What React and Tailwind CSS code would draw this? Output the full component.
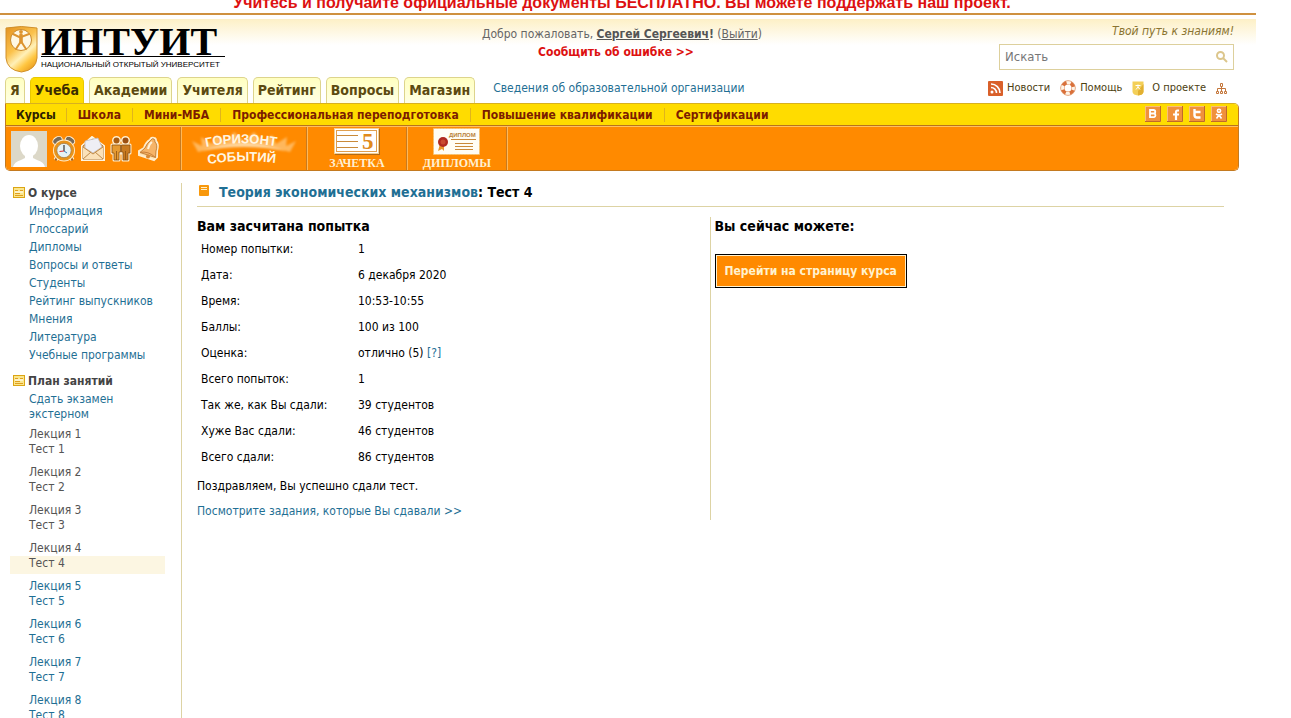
import React from "react";

const courseLinks = [
  "Информация",
  "Глоссарий",
  "Дипломы",
  "Вопросы и ответы",
  "Студенты",
  "Рейтинг выпускников",
  "Мнения",
  "Литература",
  "Учебные программы",
];

const lessons = [1, 2, 3, 4, 5, 6, 7, 8];

const tabs = ["Я", "Учеба", "Академии", "Учителя", "Рейтинг", "Вопросы", "Магазин"];

const sections = [
  "Курсы",
  "Школа",
  "Мини-МБА",
  "Профессиональная переподготовка",
  "Повышение квалификации",
  "Сертификации",
];

const results = [
  ["Номер попытки:", "1"],
  ["Дата:", "6 декабря 2020"],
  ["Время:", "10:53-10:55"],
  ["Баллы:", "100 из 100"],
  ["Оценка:", "отлично (5)"],
  ["Всего попыток:", "1"],
  ["Так же, как Вы сдали:", "39 студентов"],
  ["Хуже Вас сдали:", "46 студентов"],
  ["Всего сдали:", "86 студентов"],
];

function Shield() {
  return (
    <svg width="33" height="48" viewBox="0 0 33 48" className="shrink-0" aria-hidden="true">
      <defs>
        <linearGradient id="gold" x1="0.200" y1="0" x2="0.800" y2="1">
          <stop offset="0" stopColor="#e89a28" />
          <stop offset="0.400" stopColor="#fbc24c" />
          <stop offset="0.620" stopColor="#fff0b8" />
          <stop offset="0.800" stopColor="#ffc640" />
          <stop offset="1" stopColor="#e8981c" />
        </linearGradient>
      </defs>
      <path d="M1 3Q16 0 32 3V33Q31 45 16.500 47Q2 45 1 33Z" fill="url(#gold)" stroke="#d0902c" />
      <circle cx="16" cy="15" r="10.500" fill="#fff8e4" stroke="#c98a2c" />
      <g stroke="#dd9430" fill="none" strokeLinecap="round">
        <path d="M16 10V17" strokeWidth="3.600" />
        <path d="M8 9L15 12.500L24 9M15.500 17L11 24M16.500 17L21 24" strokeWidth="2" />
      </g>
      <circle cx="16" cy="6.800" r="1.900" fill="#dd9430" />
    </svg>
  );
}

function Logo() {
  return (
    <a href="#" className="flex w-[220px] shrink-0 gap-[3px] pt-1.5 text-black">
      <Shield />
      <span className="flex flex-1 flex-col pt-0.5">
        <span className="flex h-[30px] items-center border-b border-black font-['Liberation_Serif',serif] text-[40px] leading-[30px] font-bold">
          ИНТУИТ
        </span>
        <span className="pt-0.5 font-['Liberation_Sans',sans-serif] text-[8px] leading-3 whitespace-nowrap">
          НАЦИОНАЛЬНЫЙ ОТКРЫТЫЙ УНИВЕРСИТЕТ
        </span>
      </span>
    </a>
  );
}

function RssIcon() {
  return (
    <svg width="15" height="15" viewBox="0 0 15 15" aria-hidden="true">
      <rect width="15" height="15" rx="1" fill="#d9602a" />
      <circle cx="4" cy="11" r="1.5" fill="#fff" />
      <path d="M3 6.5A5.5 5.5 0 0 1 8.500 12M3 3A9 9 0 0 1 12 12" fill="none" stroke="#fff" strokeWidth="1.600" />
    </svg>
  );
}

function LifebuoyIcon() {
  return (
    <svg width="16" height="16" viewBox="0 0 16 16" aria-hidden="true">
      <circle cx="8" cy="8" r="5.500" fill="none" stroke="#d9703a" strokeWidth="4" />
      <circle cx="8" cy="8" r="5.500" fill="none" stroke="#fff4e6" strokeWidth="3.400" strokeDasharray="4.320 4.320" strokeDashoffset="2.160" />
      <circle cx="8" cy="8" r="7.300" fill="none" stroke="#e0a27c" strokeWidth="0.600" />
    </svg>
  );
}

function SmallShieldIcon() {
  return (
    <svg width="12" height="15" viewBox="0 0 12 15" aria-hidden="true">
      <path d="M0.500 0.500H11.500V11Q11 14 6 14.500Q1 14 0.500 11Z" fill="#f3cf58" />
      <path d="M6 10L11.500 3V11Q11 14 6 14.500Z" fill="#e2b030" />
      <path d="M6 3.500V6L4 8.500M6 6L8 8.500M3.500 4.500H8.500" stroke="#fff" fill="none" />
    </svg>
  );
}

function SitemapIcon() {
  return (
    <svg width="11" height="11" viewBox="0 0 11 11" fill="none" stroke="#c4763a" aria-hidden="true">
      <path d="M4.500 0.500H6.500V3.500H4.500ZM5.500 3.500V8M1.500 8V5.500H9.500V8M0.500 8.500H2.500V10.500H0.500ZM4.500 8.500H6.500V10.500H4.500ZM8.500 8.500H10.500V10.500H8.500Z" />
    </svg>
  );
}

function SearchIcon() {
  return (
    <svg width="12" height="12" viewBox="0 0 12 12" fill="none" stroke="#dcc68c" strokeWidth="2" aria-hidden="true">
      <circle cx="4.500" cy="4.500" r="3.500" />
      <path d="M7 7L11 11" />
    </svg>
  );
}

const socialPaths = [
  ["ВКонтакте", <path key="b" d="M5 4H8.500A1.700 1.700 0 0 1 8.500 7.500H5ZM5 7.500H9A1.900 1.900 0 0 1 9 11.200H5Z" fill="none" stroke="#fff" strokeWidth="1.800" />],
  ["Facebook", <path key="f" d="M12 4.500H10.500Q9 4.500 9 6.500V14M6 8.500H12" fill="none" stroke="#fff" strokeWidth="2.200" />],
  ["Twitter", <path key="t" d="M5.500 3V9Q5.500 11.500 8 11.500H11.500M5.500 6H11.500" fill="none" stroke="#fff" strokeWidth="2.400" />],
  [
    "Одноклассники",
    <g key="o" fill="none" stroke="#fff" strokeWidth="1.600">
      <circle cx="8" cy="4.800" r="1.600" />
      <path d="M5 8Q8 10 11 8M8 9L5.500 12.500M8 9L10.500 12.500" />
    </g>,
  ],
];

function Social() {
  return (
    <div className="ml-auto flex gap-1.5 pb-0.5">
      {socialPaths.map(([name, shape]) => (
        <a key={name} href="#" aria-label={name}>
          <svg width="16" height="16" viewBox="0 0 16 16">
            <rect x="0.500" y="0.500" width="15" height="15" fill="#f0913c" stroke="#f8bd7c" />
            <path d="M0 15.500H15.500V0" fill="none" stroke="#c0692a" />
            {shape}
          </svg>
        </a>
      ))}
    </div>
  );
}

function Avatar() {
  return (
    <svg width="36" height="36" viewBox="0 0 36 36" aria-hidden="true">
      <rect width="36" height="36" fill="#dcd8c8" />
      <ellipse cx="18" cy="15" rx="9" ry="11" fill="#fff" />
      <path d="M2 36Q3 31 10 29L14 27V22H22V27L26 29Q33 31 34 36Z" fill="#fff" />
    </svg>
  );
}

function ClockIcon() {
  return (
    <svg width="24" height="26" viewBox="0 0 24 26" aria-hidden="true">
      <path d="M5 21L3.500 24M19 21L20.500 24" stroke="#ffeccb" strokeWidth="4" />
      <path d="M5 21L3.500 24.500M19 21L20.500 24.500" stroke="#a8641c" strokeWidth="2" />
      <ellipse cx="5.500" cy="4.500" rx="5" ry="3.500" transform="rotate(-30 5.500 4.500)" fill="#756a5c" stroke="#ffeccb" />
      <ellipse cx="18" cy="4.500" rx="5" ry="3.500" transform="rotate(30 18 4.500)" fill="#756a5c" stroke="#ffeccb" />
      <circle cx="12" cy="14.500" r="11" fill="#ffeccb" />
      <circle cx="12" cy="14.500" r="8.700" fill="#e6f2f4" stroke="#e8941c" strokeWidth="2.800" />
      <circle cx="12" cy="14.500" r="7.200" fill="none" stroke="#9b6b2b" strokeWidth="0.700" />
      <path d="M12 9V15" stroke="#333" strokeWidth="1.200" />
      <path d="M12 15L7.500 15.500" stroke="#d33" strokeWidth="1.200" />
      <path d="M12 15L15 17" stroke="#3a7fc0" />
    </svg>
  );
}

function EnvelopeIcon() {
  return (
    <svg width="24" height="26" viewBox="0 0 24 26" aria-hidden="true">
      <path d="M1 10L11 1L23 10V24H1Z" fill="#fff5e0" stroke="#fff5e0" strokeWidth="2" />
      <path d="M2 10L12 3L22 10V23H2Z" fill="#f5c88a" stroke="#b07432" />
      <path d="M4 5L17 2L21 11L12 17L4 12Z" fill="#eeeef4" stroke="#b9b3b4" strokeWidth="0.700" />
      <path d="M2 11L12 17.500L22 11V23H2Z" fill="#fbe1b8" />
      <path d="M2 23L10 16M22 23L14 16M2 11L12 18L22 11" fill="none" stroke="#c08a4a" />
    </svg>
  );
}

function PeopleIcon() {
  return (
    <svg width="22" height="26" viewBox="0 0 22 26" aria-hidden="true">
      <g fill="#ffeccb" stroke="#ffeccb" strokeWidth="3" strokeLinejoin="round">
        <circle cx="6.500" cy="4.500" r="3" />
        <circle cx="15.500" cy="4.500" r="3" />
        <path d="M2 9H20V17H18V24H13V17H9V24H4V17H2Z" />
      </g>
      <circle cx="6.500" cy="4.500" r="3" fill="#a85c12" />
      <circle cx="15.500" cy="4.500" r="3" fill="#9c5012" />
      <path d="M2 9H10.500V16H9V24H4V17H2Z" fill="#e59a32" stroke="#8c5010" strokeWidth="0.800" />
      <path d="M11.500 9H20V17H18V24H13V16H11.500Z" fill="#c87a20" stroke="#8c5010" strokeWidth="0.800" />
      <path d="M6.500 15V24M15.500 15V24" stroke="#8c5010" strokeWidth="0.800" />
    </svg>
  );
}

function BellIcon() {
  return (
    <svg width="24" height="26" viewBox="0 0 24 26" aria-hidden="true">
      <path d="M13 4Q14 1 17 2Q19 2 19 5Q22 8 20 15L20 21L17 24L2 19L2 15L7 12Q9 6 13 4Z" fill="#fde0ae" stroke="#ffeccb" strokeWidth="2" />
      <path d="M14 4Q15 2 17 3Q18 4 18 6Q21 9 19 15L18.500 21.500L3 16.500L8 12Q10 7 14 4Z" fill="#f6b468" stroke="#b8722a" strokeWidth="0.800" />
      <path d="M3 16.500Q11 14.500 18.500 21.500" fill="none" stroke="#c9803a" />
      <circle cx="11" cy="20.500" r="2" fill="#d98a35" />
      <path d="M11 13Q12 8 15 6" stroke="#fff2da" strokeWidth="2" fill="none" />
    </svg>
  );
}

function Horizon() {
  return (
    <svg width="108" height="40" viewBox="0 0 108 40" role="img" aria-label="Горизонт событий">
      <defs>
        <filter id="soft" x="-10%" y="-20%" width="120%" height="140%">
          <feGaussianBlur stdDeviation="1.300" />
        </filter>
        <path id="arcTop" d="M16 18Q54 10 96 19" />
        <path id="arcBottom" d="M18 35Q54 29 92 35" />
      </defs>
      <g filter="url(#soft)" fill="#ffdca8">
        <path d="M8 23L2 12L12 17L11 8L22 15L26 6L36 13L44 3L54 12L64 3L73 13L82 6L86 15L97 8L96 17L106 12L100 23Q54 10 8 23Z" opacity="0.550" />
        <path d="M12 22Q54 6 96 22Q54 14 12 22Z" opacity="0.900" />
      </g>
      <g fill="#fff6e2" className="font-['Liberation_Sans',sans-serif] text-[13px] font-bold">
        <text><textPath href="#arcTop">ГОРИЗОНТ</textPath></text>
        <text><textPath href="#arcBottom">СОБЫТИЙ</textPath></text>
      </g>
    </svg>
  );
}

function GradebookIcon() {
  return (
    <svg width="46" height="27" viewBox="0 0 46 27" aria-hidden="true">
      <rect x="1" y="1" width="45" height="26" fill="#b06a18" />
      <rect x="0.500" y="0.500" width="44" height="25" fill="#fff" stroke="#f2cf94" />
      <rect x="2.500" y="2.500" width="40" height="21" fill="none" stroke="#e0a050" />
      <path d="M3 7.500H24M3 13.500H24M3 19.500H24" stroke="#c98a3a" />
      <text x="28" y="21" fill="#e08a1c" className="font-['Liberation_Serif',serif] text-[23px] font-bold">5</text>
    </svg>
  );
}

function DiplomaIcon() {
  return (
    <svg width="48" height="27" viewBox="0 0 48 27" aria-hidden="true">
      <rect x="0.500" y="0.500" width="46" height="26" fill="#fffdf4" stroke="#f2c06c" strokeDasharray="2 1" />
      <path d="M7 16L5 23L9 21L11 23V16Z" fill="#e8962c" />
      <circle cx="10" cy="14" r="5" fill="#b02a20" />
      <circle cx="10" cy="14" r="2.500" fill="#c94a30" />
      <path d="M18 11.500H43M22 15.500H40M22 18.500H40M22 21.500H40" stroke="#c98a3a" />
      <text x="16" y="9" fill="#b8823a" className="font-['Liberation_Sans',sans-serif] text-[6px]">ДИПЛОМ</text>
    </svg>
  );
}

function PanelIcon() {
  return (
    <svg width="12" height="11" viewBox="0 0 12 11" aria-hidden="true">
      <rect x="0.500" y="0.500" width="11" height="10" fill="#fbe68c" stroke="#dba514" />
      <path d="M2 3.500H5M7 3.500H10M2 6.500H7M2 8.500H10" stroke="#e0a020" />
      <path d="M2 5H10" stroke="#fff" />
    </svg>
  );
}

function BookIcon() {
  return (
    <svg width="10" height="11" viewBox="0 0 10 11" className="mb-1" aria-hidden="true">
      <rect width="10" height="11" rx="1" fill="#f8980c" />
      <path d="M2 2.500H8M2 4.500H8" stroke="#fff0c8" />
    </svg>
  );
}

function Header() {
  return (
    <header className="mt-1 bg-linear-to-b from-[#fdf0c6] to-white bg-[length:100%_26px] bg-no-repeat pr-[22px] pl-[5px]">
      <div className="flex h-[58px]">
        <Logo />
        <div className="ml-5 flex-1 pt-1.5 text-center text-[12px] leading-[18px] text-[#666]">
          <p>
            Добро пожаловать, <a href="#" className="font-bold text-[#555] underline">Сергей Сергеевич</a>
            <b className="text-[#555]">!</b> (<a href="#" className="underline">Выйти</a>)
          </p>
          <a href="#" className="mr-3 font-bold text-[#dd1111]">Сообщить об ошибке &gt;&gt;</a>
        </div>
        <div className="flex w-[235px] flex-col gap-1 pt-1 text-right">
          <p className="text-[12px] leading-[17px] text-[#8a7430] italic">Твой путь к знаниям!</p>
          <form className="flex h-[26px] items-center border border-[#ddd09c] bg-white px-[5px]">
            <input type="search" aria-label="Искать" placeholder="Искать" className="min-w-0 flex-1 bg-transparent text-[13px] outline-none placeholder:text-[#777]" />
            <button type="button" aria-label="Найти"><SearchIcon /></button>
          </form>
        </div>
      </div>
      <div className="flex h-[26px]">
        <nav className="flex gap-[5px]">
          {tabs.map((tab) => (
            <a
              key={tab}
              href="#"
              className={
                tab === "Учеба"
                  ? "rounded-t-[5px] border border-b-0 border-[#e8c800] bg-[#ffdc00] px-1 text-[14px] leading-[25px] font-bold text-[#3c2c00]"
                  : "rounded-t-[5px] border border-b-0 border-[#ddd48c] bg-linear-to-b from-[#ffffc0] to-[#ffffe4] px-1 text-[14px] leading-[25px] font-bold text-[#5c4a10]"
              }
            >
              {tab}
            </a>
          ))}
        </nav>
        <a href="#" className="ml-[18px] text-[12px] leading-[22px] text-[#1f6f94]">Сведения об образовательной организации</a>
        <nav className="ml-auto flex h-[22px] items-center gap-2.5 pr-[7px] text-[11px] text-[#4c4010]">
          <a href="#" className="flex items-center gap-1"><RssIcon />Новости</a>
          <a href="#" className="flex items-center gap-1"><LifebuoyIcon />Помощь</a>
          <a href="#" className="flex items-center gap-2"><SmallShieldIcon />О проекте</a>
          <a href="#" aria-label="Карта сайта"><SitemapIcon /></a>
        </nav>
      </div>
    </header>
  );
}

function Toolbar() {
  return (
    <div className="mr-[17px] ml-[5px] overflow-hidden rounded-tr-[5px] rounded-b-[5px] border border-[#c47a20] border-t-[#d8b020]">
      <nav className="flex h-[22px] items-center border-b border-[#b8741c] bg-[#ffdc00] pr-[11px] text-[12px] leading-[14px] font-bold text-[#7c1c00]">
        {sections.map((name, i) => (
          <a key={name} href="#" className={i === 0 ? "px-[10px] text-[#2c2000]" : "border-l border-[#e0b41c] px-[11px]"}>
            {name}
          </a>
        ))}
        <Social />
      </nav>
      <div className="flex h-11 border-t border-[#ffc060] bg-[#ff8a00] font-['Liberation_Serif',serif] text-[12px] leading-3 font-bold text-[#fff0d0]">
        <div className="flex w-[175px] items-center gap-[5px] border-r border-[#c87a20] pl-[5px]">
          <Avatar />
          <a href="#" aria-label="Расписание"><ClockIcon /></a>
          <a href="#" aria-label="Сообщения"><EnvelopeIcon /></a>
          <a href="#" aria-label="Друзья"><PeopleIcon /></a>
          <a href="#" aria-label="Уведомления"><BellIcon /></a>
        </div>
        <a href="#" className="flex w-[126px] items-center justify-center border-r border-l border-r-[#c87a20] border-l-[#ffb858]"><Horizon /></a>
        <a href="#" className="flex w-[100px] flex-col items-center gap-0.5 border-r border-l border-r-[#c87a20] border-l-[#ffb858] pt-px"><GradebookIcon />ЗАЧЕТКА</a>
        <a href="#" className="flex w-[100px] flex-col items-center gap-0.5 border-r border-l border-r-[#c87a20] border-l-[#ffb858] pt-px"><DiplomaIcon />ДИПЛОМЫ</a>
        <span className="border-l border-[#ffb858]" />
      </div>
    </div>
  );
}

function Sidebar() {
  return (
    <aside className="w-[182px] shrink-0 border-r border-[#ddd3a4] pr-4 pl-[10px] text-[12px] text-[#1f6f94]">
      <h2 className="flex h-[19px] items-center gap-[3px] pl-[3px] font-bold text-[#444]"><PanelIcon />О курсе</h2>
      <ul className="pl-[19px] leading-[18px]">
        {courseLinks.map((name) => (
          <li key={name}><a href="#">{name}</a></li>
        ))}
      </ul>
      <h2 className="mt-[7px] flex h-[19px] items-center gap-[3px] pl-[3px] font-bold text-[#444]"><PanelIcon />План занятий</h2>
      <p className="mt-0.5 mb-[3px] pl-[19px] leading-[15px]"><a href="#">Сдать экзамен<br />экстерном</a></p>
      <ul className="leading-[15px]">
        {lessons.map((n) => (
          <li key={n} className={n < 5 ? "flex h-[38px] flex-col text-[#555]" : "flex h-[38px] flex-col"}>
            <a href="#" className="pt-[2px] pl-[19px]">Лекция {n}</a>
            <a href="#" className={n === 4 ? "bg-[#fcf6e2] pb-[3px] pl-[19px]" : "pb-[3px] pl-[19px]"}>Тест {n}</a>
          </li>
        ))}
      </ul>
    </aside>
  );
}

function Result() {
  return (
    <main className="flex-1 pr-8 pl-[15px] text-[12px] text-black">
      <h1 className="flex h-6 items-center gap-2.5 border-b border-[#ddd3a4] pb-1 pl-0.5 text-[14px] font-bold">
        <BookIcon />
        <span><a href="#" className="text-[#1f6f94]">Теория экономических механизмов</a>: Тест 4</span>
      </h1>
      <div className="mt-2.5 grid grid-cols-2">
        <section className="h-[303px] border-r border-[#ddd3a4]">
          <h2 className="text-[14px] leading-[19px] font-bold">Вам засчитана попытка</h2>
          <table className="ml-1">
            <tbody>
              {results.map(([label, value]) => (
                <tr key={label} className="h-[26px]">
                  <th scope="row" className="w-[157px] text-left font-normal">{label}</th>
                  <td>
                    {value}
                    {label === "Оценка:" && <a href="#" className="text-[#1f6f94]"> [?]</a>}
                  </td>
                </tr>
              ))}
            </tbody>
          </table>
          <p className="mt-[7px] leading-[18px]">Поздравляем, Вы успешно сдали тест.</p>
          <p className="mt-[7px] leading-[18px]"><a href="#" className="text-[#1f6f94]">Посмотрите задания, которые Вы сдавали &gt;&gt;</a></p>
        </section>
        <section className="pl-1">
          <h2 className="text-[14px] leading-[19px] font-bold">Вы сейчас можете:</h2>
          <button type="button" className="mt-[18px] h-[34px] border border-black bg-[#ff8a00] px-[9px] text-[12px] font-bold text-[#fff2d0] ring-1 ring-[#fff2d0] ring-inset">
            Перейти на страницу курса
          </button>
        </section>
      </div>
    </main>
  );
}

export default function App() {
  return (
    <div className="h-screen overflow-hidden bg-white pr-[35px] font-['DejaVu_Sans_Condensed',sans-serif]">
      <div className="flex h-[15px] items-end justify-center overflow-hidden border-b-2 border-[#cf9140] pr-3 pb-0.5 font-['Liberation_Sans',sans-serif] text-[16px] leading-4 font-bold text-[#dd1111]">
        <p>Учитесь и получайте официальные документы БЕСПЛАТНО. Вы можете поддержать наш проект.</p>
      </div>
      <Header />
      <Toolbar />
      <div className="mt-3 flex min-h-screen">
        <Sidebar />
        <Result />
      </div>
    </div>
  );
}
